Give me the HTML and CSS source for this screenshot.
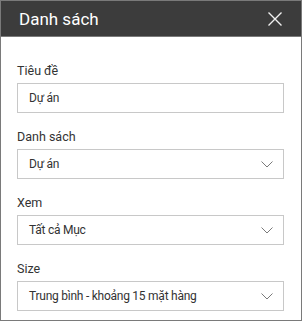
FILE: index.html
```html
<!DOCTYPE html>
<html lang="vi">
<head>
  <meta charset="UTF-8">
  <meta name="viewport" content="width=device-width, initial-scale=1.0">
  <title>Danh sách</title>
  <link rel="stylesheet" href="styles.css">
</head>
<body>
  <div class="panel">
    <div class="header">
      <span class="title">Danh sách</span>
      <svg class="close" width="14" height="14" viewBox="0 0 14 14">
        <path d="M0.5 0.5 L13.5 13.5 M13.5 0.5 L0.5 13.5" stroke="#f0f0f0" stroke-width="1.4" fill="none"/>
      </svg>
    </div>
    <div class="content">
      <div class="field">
        <div class="label">Tiêu đề</div>
        <div class="box">Dự án</div>
      </div>
      <div class="field">
        <div class="label">Danh sách</div>
        <div class="box dropdown">Dự án
          <svg class="chevron" width="12" height="7" viewBox="0 0 12 7"><path d="M0.5 0.5 L6 6 L11.5 0.5" stroke="#7a7a7a" stroke-width="1" fill="none"/></svg>
        </div>
      </div>
      <div class="field">
        <div class="label">Xem</div>
        <div class="box dropdown">Tất cả Mục
          <svg class="chevron" width="12" height="7" viewBox="0 0 12 7"><path d="M0.5 0.5 L6 6 L11.5 0.5" stroke="#7a7a7a" stroke-width="1" fill="none"/></svg>
        </div>
      </div>
      <div class="field">
        <div class="label">Size</div>
        <div class="box dropdown">Trung bình - khoảng 15 mặt hàng
          <svg class="chevron" width="12" height="7" viewBox="0 0 12 7"><path d="M0.5 0.5 L6 6 L11.5 0.5" stroke="#7a7a7a" stroke-width="1" fill="none"/></svg>
        </div>
      </div>
    </div>
  </div>
</body>
</html>
```

FILE: styles.css
```css
body {
  margin: 0;
  font-family: Roboto, "Liberation Sans", Arial, sans-serif;
  background-color: #ffffff;
}

.panel {
  width: 302px;
  height: 321px;
  box-sizing: border-box;
  border: 1px solid #7a7a7a;
  background-color: #ffffff;
}

.header {
  height: 35px;
  background-color: #3c3c3c;
  border-bottom: 1px solid #7a7a7a;
  display: flex;
  align-items: center;
  justify-content: space-between;
  padding: 0 19px 0 18px;
}

.title {
  color: #ffffff;
  font-size: 17px;
}

.close {
  display: block;
}

.content {
  padding: 25px 17px 0 16px;
}

.field {
  margin-bottom: 15px;
}

.label {
  font-size: 12.5px;
  line-height: 18px;
  color: #333333;
  margin-bottom: 3px;
}

.box {
  height: 30px;
  box-sizing: border-box;
  border: 1px solid #c8c8c8;
  padding: 0 10px 0 11px;
  display: flex;
  align-items: center;
  justify-content: space-between;
  font-size: 12px;
  letter-spacing: -0.25px;
  color: #333333;
}

.chevron {
  display: block;
}
```
